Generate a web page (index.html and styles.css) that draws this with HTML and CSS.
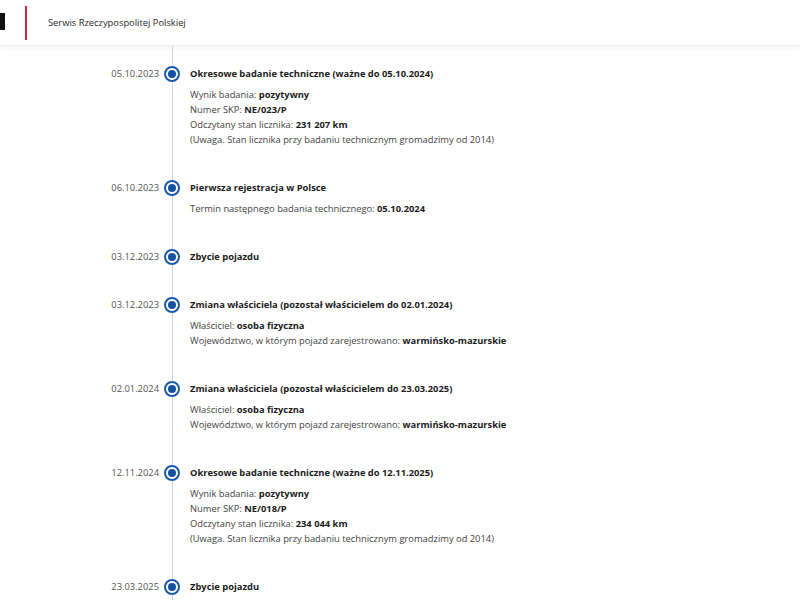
FILE: index.html
```html
<!DOCTYPE html>
<html lang="pl">
<head>
  <meta charset="UTF-8" />
  <meta name="viewport" content="width=device-width, initial-scale=1.0" />
  <title>Historia pojazdu</title>
  <link rel="stylesheet" href="styles.css">
</head>
<body>
  <header class="site-header">
    <div class="brand-mark"></div>
    <div class="brand-sep"></div>
    <div class="brand-name">Serwis Rzeczypospolitej Polskiej</div>
  </header>

  <main class="timeline">
    <div class="event">
      <div class="event-date">05.10.2023</div>
      <div class="event-dot"></div>
      <div class="event-body">
        <div class="event-title">Okresowe badanie techniczne (ważne do 05.10.2024)</div>
        <div class="event-details">
          <div>Wynik badania: <b>pozytywny</b></div>
          <div>Numer SKP: <b>NE/023/P</b></div>
          <div>Odczytany stan licznika: <b>231 207 km</b></div>
          <div>(Uwaga. Stan licznika przy badaniu technicznym gromadzimy od 2014)</div>
        </div>
      </div>
    </div>

    <div class="event">
      <div class="event-date">06.10.2023</div>
      <div class="event-dot"></div>
      <div class="event-body">
        <div class="event-title">Pierwsza rejestracja w Polsce</div>
        <div class="event-details">
          <div>Termin następnego badania technicznego: <b>05.10.2024</b></div>
        </div>
      </div>
    </div>

    <div class="event">
      <div class="event-date">03.12.2023</div>
      <div class="event-dot"></div>
      <div class="event-body">
        <div class="event-title">Zbycie pojazdu</div>
      </div>
    </div>

    <div class="event">
      <div class="event-date">03.12.2023</div>
      <div class="event-dot"></div>
      <div class="event-body">
        <div class="event-title">Zmiana właściciela (pozostał właścicielem do 02.01.2024)</div>
        <div class="event-details">
          <div>Właściciel: <b>osoba fizyczna</b></div>
          <div>Województwo, w którym pojazd zarejestrowano: <b>warmińsko-mazurskie</b></div>
        </div>
      </div>
    </div>

    <div class="event">
      <div class="event-date">02.01.2024</div>
      <div class="event-dot"></div>
      <div class="event-body">
        <div class="event-title">Zmiana właściciela (pozostał właścicielem do 23.03.2025)</div>
        <div class="event-details">
          <div>Właściciel: <b>osoba fizyczna</b></div>
          <div>Województwo, w którym pojazd zarejestrowano: <b>warmińsko-mazurskie</b></div>
        </div>
      </div>
    </div>

    <div class="event">
      <div class="event-date">12.11.2024</div>
      <div class="event-dot"></div>
      <div class="event-body">
        <div class="event-title">Okresowe badanie techniczne (ważne do 12.11.2025)</div>
        <div class="event-details">
          <div>Wynik badania: <b>pozytywny</b></div>
          <div>Numer SKP: <b>NE/018/P</b></div>
          <div>Odczytany stan licznika: <b>234 044 km</b></div>
          <div>(Uwaga. Stan licznika przy badaniu technicznym gromadzimy od 2014)</div>
        </div>
      </div>
    </div>

    <div class="event">
      <div class="event-date">23.03.2025</div>
      <div class="event-dot"></div>
      <div class="event-body">
        <div class="event-title">Zbycie pojazdu</div>
      </div>
    </div>
  </main>
</body>
</html>
```

FILE: styles.css
```css
* {
  box-sizing: border-box;
}

html, body {
  margin: 0;
  padding: 0;
  height: 100%;
  overflow: hidden;
  background: #ffffff;
  font-family: 'Open Sans', 'Noto Sans', sans-serif;
  font-size: 9.35px;
  color: #333;
}

/* header */

.site-header {
  height: 46px;
  display: flex;
  align-items: center;
  border-bottom: 1px solid #eeeeee;
  box-shadow: 0 2px 4px rgba(0, 0, 0, 0.05);
}

.brand-mark {
  width: 5px;
  height: 17px;
  background: #111;
  margin-top: -2px;
}

.brand-sep {
  width: 2px;
  height: 34px;
  margin-left: 20px;
  background: #d2243f;
}

.brand-name {
  margin-left: 21px;
  color: #2b2b2b;
  margin-top: -1px;
}

/* timeline */

.timeline {
  padding: 20px 0 0 60px;
  background: linear-gradient(#cdd3dc, #cdd3dc) no-repeat 172px 0 / 1px 100%;
  height: calc(100% - 46px);
}

.event {
  display: grid;
  grid-template-columns: 99px 16px 1fr;
  column-gap: 5px;
  line-height: 15px;
  padding-bottom: 33px;
}

.event-body {
  margin-left: 5px;
}

.event-date {
  text-align: right;
  color: #555;
}

.event-dot {
  width: 16px;
  height: 16px;
  margin: -0.5px 0 -1px;
  border: 2px solid #1a58ad;
  border-radius: 50%;
  background: #fff;
  display: flex;
  align-items: center;
  justify-content: center;
}

.event-dot::after {
  content: '';
  width: 8px;
  height: 8px;
  border-radius: 50%;
  background: #14509f;
}

.event-title {
  font-weight: 700;
  color: #1b1b1b;
}

.event-details {
  margin-top: 6px;
  color: #444;
}

.event-details b {
  color: #1b1b1b;
}
```
